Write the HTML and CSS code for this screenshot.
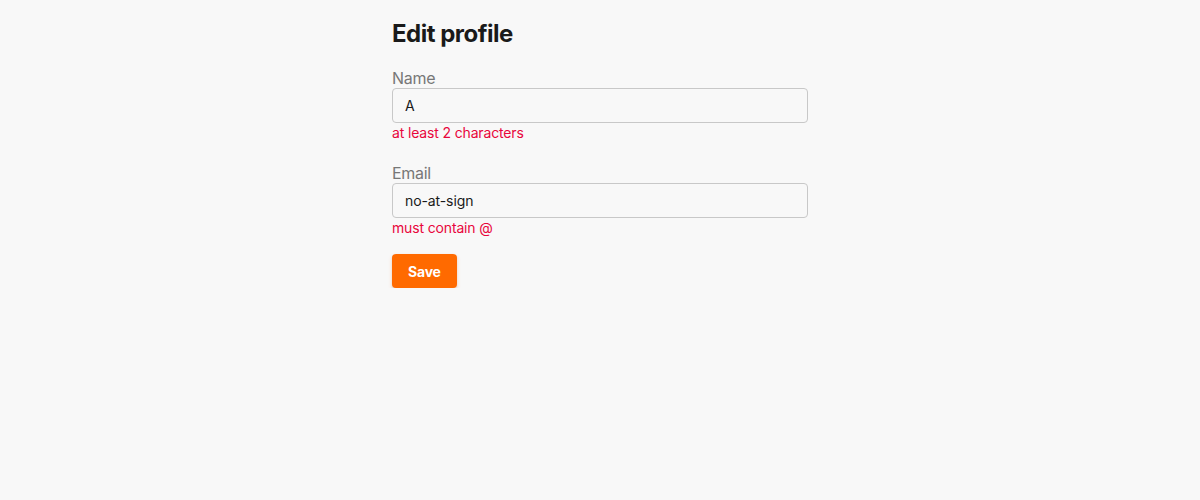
FILE: index.html
```html
<!DOCTYPE html>
<html lang="en">
<head>
<meta charset="utf-8">
<title>Edit profile</title>
<link rel="stylesheet" href="styles.css">
</head>
<body>
<main class="page">
  <h1 class="title">Edit profile</h1>
  <form class="form">
    <div class="field">
      <label class="label" for="name">Name</label>
      <input class="input" id="name" type="text" value="A">
      <div class="error">at least 2 characters</div>
    </div>
    <div class="field">
      <label class="label" for="email">Email</label>
      <input class="input" id="email" type="text" value="no-at-sign">
      <div class="error">must contain @</div>
    </div>
    <div class="actions">
      <button class="btn" type="button">Save</button>
    </div>
  </form>
</main>
</body>
</html>
```

FILE: styles.css
```css
html, body {
  margin: 0;
  padding: 0;
  background: #f8f8f8;
}
body {
  font-family: Inter, "Noto Sans", "Liberation Sans", sans-serif;
  color: #1a1a1a;
}
.page {
  width: 416px;
  margin: 0 auto;
  padding-top: 19px;
}
.title {
  margin: 0 0 20px;
  font-size: 24px;
  line-height: 29px;
  font-weight: 700;
  letter-spacing: -0.5px;
  color: #1a1a1a;
}
.form {
  display: flex;
  flex-direction: column;
  gap: 20px;
}
.field {
  display: flex;
  flex-direction: column;
}
.label {
  font-size: 16px;
  line-height: 20px;
  letter-spacing: -0.3px;
  color: #777;
}
.input {
  box-sizing: border-box;
  width: 100%;
  height: 35px;
  margin: 0;
  padding: 8px 12px;
  font-family: inherit;
  font-size: 14px;
  letter-spacing: -0.1px;
  color: #1a1a1a;
  background: #f8f8f8;
  border: 1px solid #c8c8c8;
  border-radius: 4px;
  outline: none;
}
.error {
  font-size: 14px;
  line-height: 20px;
  letter-spacing: -0.15px;
  color: #e8063c;
}
.actions {
  display: flex;
  margin-top: -4px;
}
.btn {
  height: 34px;
  padding: 0 16px;
  font-family: inherit;
  font-size: 14px;
  font-weight: 700;
  letter-spacing: -0.2px;
  color: #fff;
  background: #ff6a00;
  border: none;
  border-radius: 4px;
  box-shadow: 0 2px 4px rgba(255, 106, 0, 0.2), 0 1px 2px rgba(0, 0, 0, 0.1);
  cursor: pointer;
}
```
